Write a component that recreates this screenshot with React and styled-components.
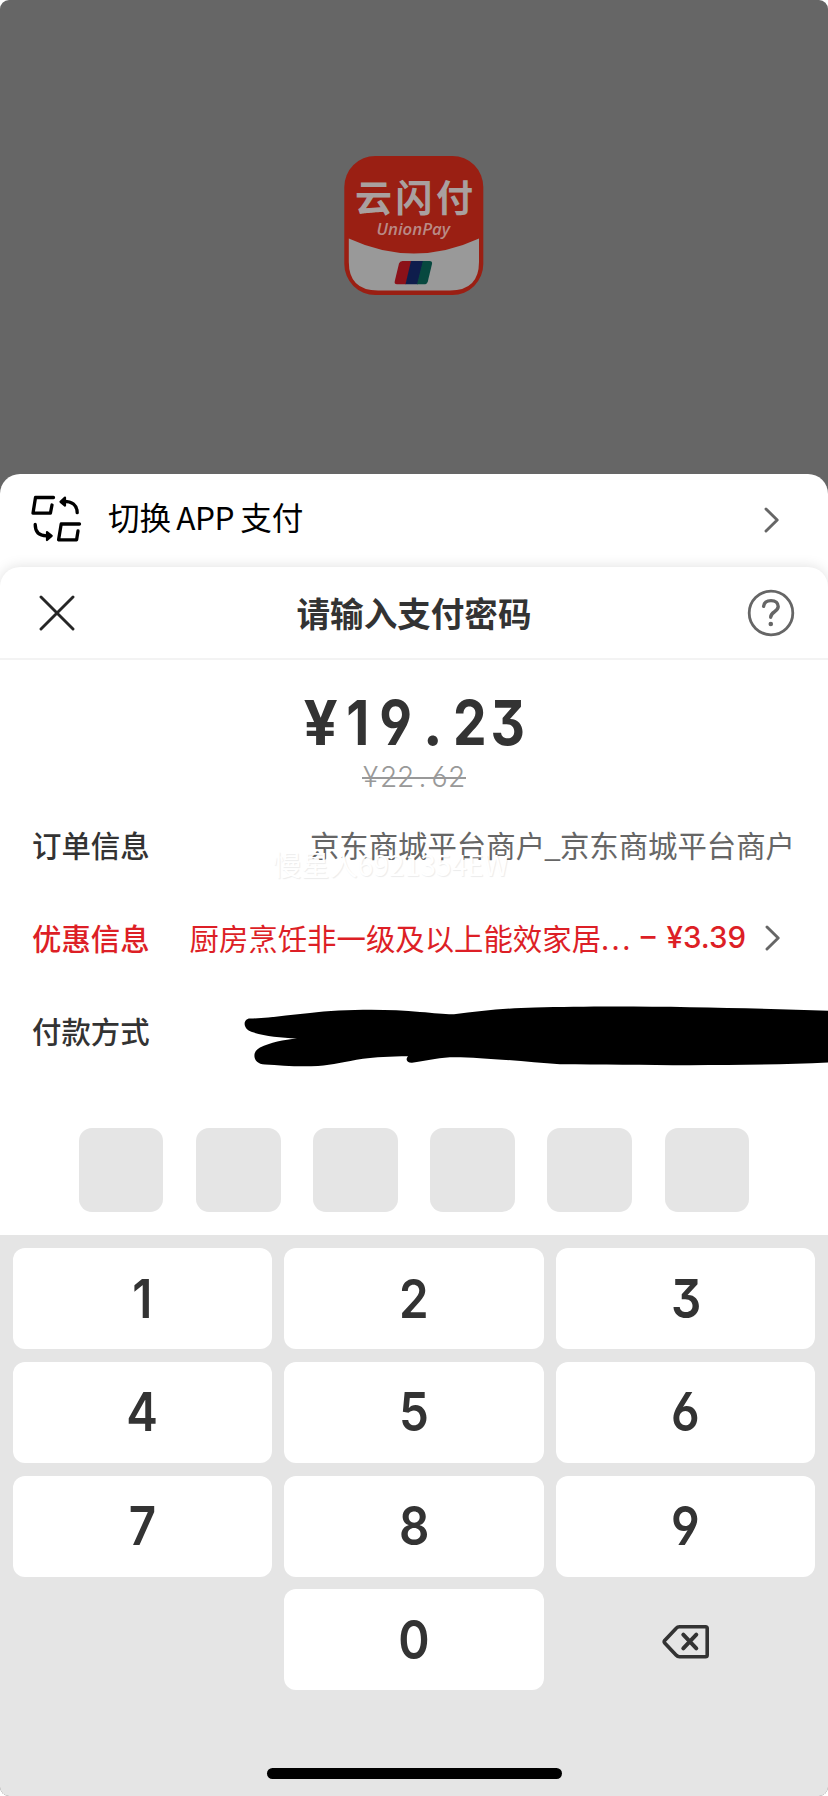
import React from 'react';
import styled, { createGlobalStyle } from 'styled-components';

const KEYS = ['1', '2', '3', '4', '5', '6', '7', '8', '9'];

const ChevronIcon = () => (
  <svg width="16" height="28" viewBox="0 0 16 28" fill="none" stroke="#666" strokeWidth="2.9" strokeLinecap="round" strokeLinejoin="round">
    <path d="M2 3 L13.2 14 L2 25" />
  </svg>
);

const SwitchIcon = () => (
  <svg width="52" height="50" viewBox="0 0 52 50" fill="none" stroke="#000" strokeWidth="3.3" strokeLinecap="round" strokeLinejoin="round">
    <path d="M23.5 4.5 H5.5 L3 20.2 H20.4 L22 12" />
    <path d="M49.5 31 H31.2 L28.6 46.8 H46.6 L48 38" />
    <path d="M33 8.3 C42 8 47.2 12 47.2 19.7" />
    <path d="M35 4.5 L30.5 8.8 L35 12.6 Z" fill="#000" strokeWidth="2.2" />
    <path d="M5.2 31.5 C5.2 38 8.5 42.7 16.5 42.9" />
    <path d="M17 39 L21.7 42.9 L17 47 Z" fill="#000" strokeWidth="2.2" />
  </svg>
);

const CloseIcon = () => (
  <svg width="36" height="36" viewBox="0 0 36 36" fill="none" stroke="#262626" strokeWidth="2.9" strokeLinecap="round">
    <path d="M2 2 L34 34 M34 2 L2 34" />
  </svg>
);

const HelpIcon = () => (
  <svg width="48" height="48" viewBox="0 0 48 48" fill="none" stroke="#666" strokeLinecap="round">
    <circle cx="24" cy="24" r="21.8" strokeWidth="2.8" />
    <path d="M16.6 17.4 C17 13.4 19.8 11.6 24 11.6 C28.6 11.6 31.2 14.2 31.2 17.6 C31.2 23.2 23.7 22.4 23.7 28.3" strokeWidth="3.4" />
    <circle cx="23.8" cy="35" r="2.3" fill="#666" stroke="none" />
  </svg>
);

const DeleteIcon = () => (
  <svg width="48" height="36" viewBox="0 0 48 36" fill="none" stroke="#333" strokeLinecap="round" strokeLinejoin="round">
    <path d="M17.5 2.7 H43.5 Q45.2 2.7 45.2 4.4 V31 Q45.2 32.7 43.5 32.7 H17.5 Q15.5 32.7 14 31 L2.7 19 Q1.7 17.7 2.7 16.4 L14 4.4 Q15.5 2.7 17.5 2.7 Z" strokeWidth="3.6" />
    <path d="M21.3 10.7 L34.3 24.3 M34.3 10.7 L21.3 24.3" strokeWidth="4" />
  </svg>
);

const UnionPayLogo = () => (
  <svg width="140" height="140" viewBox="0 0 140 140">
    <rect x="0.3" y="0" width="139" height="139" rx="31" fill="#9a1f13" />
    <path d="M4.8 82.5 Q70 112.5 135 82.5 V106 Q135 134.5 106 134.5 H34 Q4.8 134.5 4.8 106 Z" fill="#999" />
    <LogoText x="11" y="55.5" fontSize="37" textLength="118">云闪付</LogoText>
    <LogoText $latin x="32.5" y="79" fontSize="16.5" textLength="73.5" lengthAdjust="spacingAndGlyphs">UnionPay</LogoText>
    <path d="M58.5 105 H68 L62 128.3 H53 Q50 128.3 50.8 125 L55 107.6 Q55.7 105 58.5 105 Z" fill="#8c1119" />
    <path d="M67 105 H79.5 L73.8 128.3 H61.5 Z" fill="#0e1d4c" />
    <path d="M78.8 105 H85.5 Q88.6 105 88 108 L83.8 125.4 Q83 128.3 80 128.3 H73 Z" fill="#07483f" />
  </svg>
);

const App = () => {
  return (
    <>
      <GlobalStyle />
      <Screen>
        <Backdrop>
          <UnionPayLogo />
        </Backdrop>
        <SwitchBar>
          <SwitchIcon />
          <SwitchLabel>
            切换<Latin>APP</Latin>支付
          </SwitchLabel>
          <ChevronIcon />
        </SwitchBar>
        <Sheet>
          <SheetHeader>
            <CloseIcon />
            <Title>请输入支付密码</Title>
            <HelpIcon />
          </SheetHeader>
          <Amounts>
            <Price>
              {'¥19.23'.split('').map((char, i) => (
                <Digit key={i} $width={37.4} $wide={'¥.'.includes(char)}>{char}</Digit>
              ))}
            </Price>
            <OldPrice>
              {'¥22.62'.split('').map((char, i) => (
                <Digit key={i} $width={17.2} $wide>{char}</Digit>
              ))}
            </OldPrice>
          </Amounts>
          <Row>
            <Label>订单信息</Label>
            <Value>京东商城平台商户<Underscore>_</Underscore>京东商城平台商户</Value>
          </Row>
          <Row $red>
            <Label>优惠信息</Label>
            <Discount>
              厨房烹饪非一级及以上能效家居<Dots>...</Dots>
            </Discount>
            <Saving>– ¥3.39</Saving>
            <RowArrow>
              <ChevronIcon />
            </RowArrow>
          </Row>
          <Row>
            <Label>付款方式</Label>
            <Redaction viewBox="240 1000 588 70">
              <path d="M250 1018.5 C272 1018 290 1014.5 310 1013 C340 1009.5 385 1008.5 420 1012 C435 1013 445 1014.5 454 1014.3 C480 1011 505 1008 535 1007.5 C620 1004.8 740 1007.5 828 1010.8 V1062.5 C745 1066.5 640 1065 560 1064.2 C520 1061.5 475 1056.5 450 1057.2 C435 1058 425 1061 412 1062.8 C407 1063 405 1059.5 408 1056.3 C390 1056.5 375 1057.2 363 1058.8 C345 1061.5 333 1065.2 318 1066 C298 1067 281 1065.5 265 1064.5 C253 1064 251 1052 260 1047.5 C270 1042.5 284 1039.5 297 1038.5 C280 1037.5 264 1036 252 1032 C242 1029 243 1018.5 250 1018.5 Z" />
            </Redaction>
          </Row>
          <Watermark>慢星人6921354EW</Watermark>
          <PinBoxes>
            {[0, 1, 2, 3, 4, 5].map((i) => (
              <PinBox key={i} />
            ))}
          </PinBoxes>
        </Sheet>
        <Keyboard>
          <KeyGrid>
            {KEYS.map((key) => (
              <Key key={key}><KeyText>{key}</KeyText></Key>
            ))}
            <span />
            <Key><KeyText>0</KeyText></Key>
            <DeleteKey aria-label="delete"><DeleteIcon /></DeleteKey>
          </KeyGrid>
          <HomeBar />
        </Keyboard>
      </Screen>
    </>
  );
};

// Styled Components
const GlobalStyle = createGlobalStyle`
  * {
    box-sizing: border-box;
  }

  body {
    margin: 0;
    background: #fff;
    font-family: 'Noto Sans CJK SC', sans-serif;
  }

  svg {
    display: block;
    flex-shrink: 0;
  }
`;

const Screen = styled.div`
  width: 828px;
  height: 1796px;
  display: flex;
  flex-direction: column;
  border-radius: 9px;
  overflow: hidden;
  background: #666;
`;

const Backdrop = styled.div`
  height: 474px;
  padding-top: 156px;
  display: flex;
  justify-content: center;
  align-items: flex-start;
  flex-shrink: 0;
`;

const LogoText = styled.text`
  font-family: ${({ $latin }) => ($latin ? "'Open Sans', sans-serif" : "'Noto Sans CJK SC', sans-serif")};
  font-style: ${({ $latin }) => ($latin ? 'italic' : 'normal')};
  font-weight: ${({ $latin }) => ($latin ? 600 : 700)};
  fill: ${({ $latin }) => ($latin ? '#b98a86' : '#a9a09f')};
`;

const SwitchBar = styled.div`
  height: 121px;
  padding: 0 48px 34px 30px;
  display: flex;
  align-items: center;
  flex-shrink: 0;
  background: #fff;
  border-radius: 20px 20px 0 0;

  > svg:last-child {
    margin-top: 5px;
  }
`;

const SwitchLabel = styled.div`
  flex: 1;
  margin: -4px 0 0 26px;
  font-size: 31.6px;
  line-height: 44px;
  color: #000;
`;

const Latin = styled.span`
  margin: 0 6px 0 5px;
  letter-spacing: -0.4px;
`;

const Sheet = styled.div`
  position: relative;
  height: 668px;
  margin-top: -28px;
  flex-shrink: 0;
  background: #fff;
  border-radius: 20px 20px 0 0;
  box-shadow: 0 0 14px rgba(0, 0, 0, 0.13);
`;

const SheetHeader = styled.div`
  height: 93px;
  padding: 1px 33px 0 39px;
  display: flex;
  justify-content: space-between;
  align-items: center;
  border-bottom: 2px solid #f3f3f3;
`;

const Title = styled.h1`
  margin: 0 0 0 6px;
  font-size: 33.6px;
  line-height: 48px;
  font-weight: 700;
  color: #333;
`;

const Amounts = styled.div`
  height: 137px;
  padding-top: 30px;
  display: flex;
  flex-direction: column;
  align-items: center;
  font-family: Inter, sans-serif;
  font-feature-settings: 'cv03', 'cv04', 'cv09';
`;

const Price = styled.div`
  display: flex;
  font-size: 62px;
  line-height: 66px;
  font-weight: 700;
  color: #333;
`;

const OldPrice = styled.div`
  position: relative;
  margin-top: 2px;
  display: flex;
  font-size: 29px;
  line-height: 38px;
  font-weight: 300;
  color: #999;

  &::after {
    content: '';
    position: absolute;
    left: 0;
    right: 0;
    top: 19px;
    height: 2px;
    background: #999;
  }
`;

const Digit = styled.span`
  width: ${({ $width }) => $width}px;
  display: flex;
  justify-content: center;
  transform: scaleX(${({ $wide }) => ($wide ? 0.97 : 0.86)});
`;

const Row = styled.div`
  height: 93px;
  padding: 0 33px 0 32px;
  display: flex;
  align-items: center;
  font-size: 29.4px;
  line-height: 44px;
  white-space: nowrap;
  color: ${({ $red }) => ($red ? '#dd1f26' : '#333')};
`;

const Label = styled.div`
  font-weight: 500;
`;

const Value = styled.div`
  margin-left: auto;
  color: #666;
`;

const Underscore = styled.span`
  margin: 0 -0.8px;
`;

const Discount = styled.div`
  margin-left: 40px;
`;

const Dots = styled.span`
  letter-spacing: 2.4px;
`;

const Saving = styled.div`
  margin-left: auto;
  font-family: Inter, sans-serif;
  font-size: 29.5px;
  font-weight: 500;
  word-spacing: 3px;
`;

const RowArrow = styled.div`
  margin: 3px 14px 0 19px;
`;

// marker strokes hiding the bank card
const Redaction = styled.svg`
  position: absolute;
  top: 433px;
  right: 0;
  width: 588px;
  height: 70px;
`;

const Watermark = styled.div`
  position: absolute;
  left: 273px;
  top: 277px;
  font-size: 28.2px;
  line-height: 40px;
  color: #fff;
  text-shadow: 1px 1px 1px rgba(0, 0, 0, 0.08);
`;

const PinBoxes = styled.div`
  padding: 52px 79px 0;
  display: flex;
  justify-content: space-between;
`;

const PinBox = styled.div`
  width: 84.4px;
  height: 84px;
  border-radius: 13px;
  background: #e5e5e5;
`;

const Keyboard = styled.div`
  position: relative;
  flex: 1;
  padding: 13px 12.5px 0;
  background: #e5e5e5;
`;

const KeyGrid = styled.div`
  display: grid;
  grid-template-columns: repeat(3, 1fr);
  grid-auto-rows: 101px;
  gap: 12.8px 12.2px;
`;

const Key = styled.button`
  display: flex;
  justify-content: center;
  align-items: center;
  padding: 0;
  border: none;
  border-radius: 12px;
  background: #fff;
  color: #333;
`;

const KeyText = styled.span`
  font-family: Inter, sans-serif;
  font-feature-settings: 'cv03', 'cv04', 'cv09';
  font-size: 54px;
  line-height: 60px;
  font-weight: 600;
  transform: scaleX(0.88);
`;

const DeleteKey = styled(Key)`
  background: transparent;
  padding-top: 4px;
`;

const HomeBar = styled.div`
  position: absolute;
  left: 267px;
  bottom: 17px;
  width: 295px;
  height: 11px;
  border-radius: 6px;
  background: #000;
`;

export default App;
